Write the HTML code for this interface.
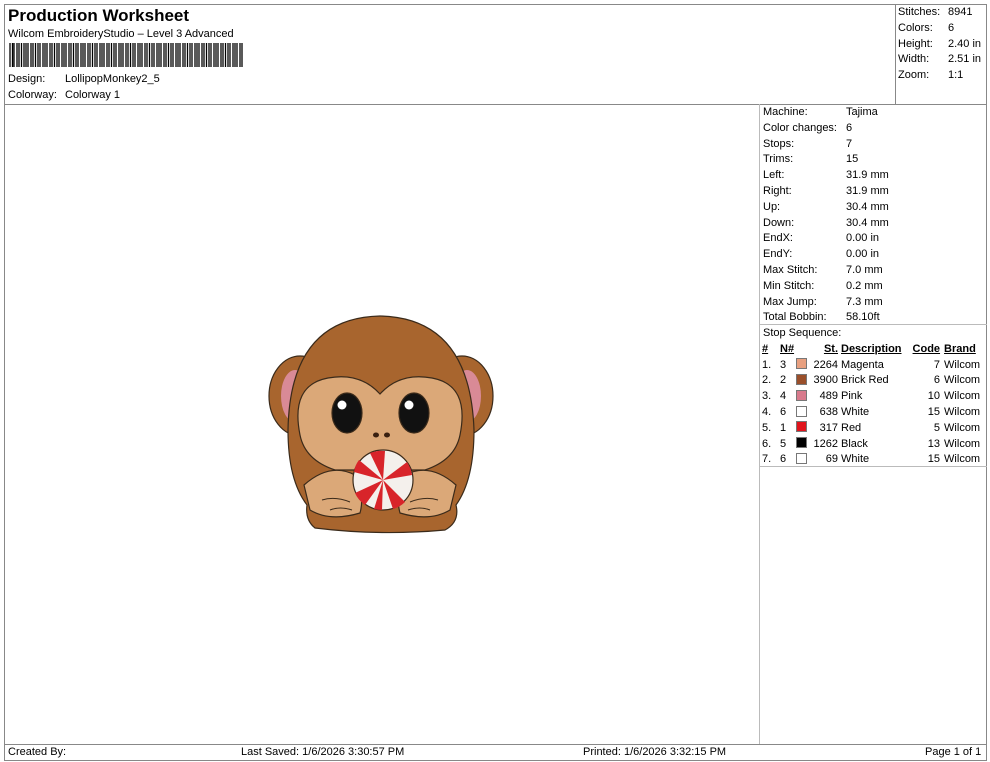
<!DOCTYPE html>
<html><head><style>
body{margin:0;width:990px;height:762px;background:#fff;font-family:"Liberation Sans",Arial,sans-serif;font-size:11px;color:#000;position:relative;overflow:hidden}
.a{position:absolute;white-space:nowrap}
.l{position:absolute;background:#888}
table{border-collapse:collapse;font-size:11px}
td{padding:0;height:15.8px}
.sw{display:inline-block;width:9px;height:9px;border:1px solid #777;vertical-align:-1px}
</style></head><body>
<div class="l" style="left:4px;top:4px;width:983px;height:1px"></div>
<div class="l" style="left:4px;top:4px;width:1px;height:757px"></div>
<div class="l" style="left:986px;top:4px;width:1px;height:757px"></div>
<div class="l" style="left:4px;top:104px;width:983px;height:1px"></div>
<div class="l" style="left:895px;top:4px;width:1px;height:100px"></div>
<div class="l" style="left:759px;top:104px;width:1px;height:641px;background:#bbb"></div>
<div class="l" style="left:759px;top:324px;width:228px;height:1px;background:#bbb"></div>
<div class="l" style="left:759px;top:466px;width:228px;height:1px;background:#bbb"></div>
<div class="l" style="left:4px;top:744px;width:983px;height:1px"></div>
<div class="l" style="left:4px;top:760px;width:983px;height:1px"></div>

<div class="a" style="left:8px;top:6px;font-size:17px;font-weight:bold">Production Worksheet</div>
<div class="a" style="left:8px;top:28px">Wilcom EmbroideryStudio – Level 3 Advanced</div>
<svg class="a" style="left:9px;top:43px" width="235" height="24">
<path stroke="#000" stroke-width="1.3" d="M1 0v24M3.5 0v24M5 0v24M8 0v24M10 0v24M12.5 0v24M15 0v24M17 0v24M19 0v24M22 0v24M24 0v24M26.5 0v24M29 0v24M31 0v24M34 0v24M36 0v24M38 0v24M41 0v24M43 0v24M45.5 0v24M48 0v24M50 0v24M53 0v24M55 0v24M57 0v24M60 0v24M62 0v24M64.5 0v24M67 0v24M69 0v24M72 0v24M74 0v24M76 0v24M79 0v24M81 0v24M83.5 0v24M86 0v24M88 0v24M91 0v24M93 0v24M95 0v24M98 0v24M100 0v24M102.5 0v24M105 0v24M107 0v24M110 0v24M112 0v24M114 0v24M117 0v24M119 0v24M121.5 0v24M124 0v24M126 0v24M129 0v24M131 0v24M133 0v24M136 0v24M138 0v24M140.5 0v24M143 0v24M145 0v24M148 0v24M150 0v24M152 0v24M155 0v24M157 0v24M159.5 0v24M162 0v24M164 0v24M167 0v24M169 0v24M171 0v24M174 0v24M176 0v24M178.5 0v24M181 0v24M183 0v24M186 0v24M188 0v24M190 0v24M193 0v24M195 0v24M197.5 0v24M200 0v24M202 0v24M205 0v24M207 0v24M209 0v24M212 0v24M214 0v24M216.5 0v24M219 0v24M221 0v24M224 0v24M226 0v24M228 0v24M231 0v24M233 0v24"/>
</svg>
<div class="a" style="left:8px;top:73px">Design:</div><div class="a" style="left:65px;top:73px">LollipopMonkey2_5</div>
<div class="a" style="left:8px;top:89px">Colorway:</div><div class="a" style="left:65px;top:89px">Colorway 1</div>

<div class="a" style="left:898px;top:5px;line-height:15.8px">Stitches:<br>Colors:<br>Height:<br>Width:<br>Zoom:</div>
<div class="a" style="left:948px;top:5px;line-height:15.8px">8941<br>6<br>2.40 in<br>2.51 in<br>1:1</div>

<div class="a" style="left:763px;top:105px;line-height:15.8px">Machine:<br>Color changes:<br>Stops:<br>Trims:<br>Left:<br>Right:<br>Up:<br>Down:<br>EndX:<br>EndY:<br>Max Stitch:<br>Min Stitch:<br>Max Jump:<br>Total Bobbin:<br>Stop Sequence:</div>
<div class="a" style="left:846px;top:105px;line-height:15.8px">Tajima<br>6<br>7<br>15<br>31.9 mm<br>31.9 mm<br>30.4 mm<br>30.4 mm<br>0.00 in<br>0.00 in<br>7.0 mm<br>0.2 mm<br>7.3 mm<br>58.10ft</div>

<table class="a" style="left:762px;top:341px;width:223px">
<tr style="font-weight:bold;text-decoration:underline"><td style="width:18px">#</td><td style="width:16px">N#</td><td style="width:14px"></td><td style="text-align:right;width:28px">St.</td><td style="padding-left:3px">Description</td><td style="text-align:right">Code</td><td style="padding-left:4px">Brand</td></tr>
<tr><td>1.</td><td>3</td><td><span class="sw" style="background:#e8a080"></span></td><td align="right">2264</td><td style="padding-left:3px">Magenta</td><td align="right">7</td><td style="padding-left:4px">Wilcom</td></tr>
<tr><td>2.</td><td>2</td><td><span class="sw" style="background:#9a4f2a"></span></td><td align="right">3900</td><td style="padding-left:3px">Brick Red</td><td align="right">6</td><td style="padding-left:4px">Wilcom</td></tr>
<tr><td>3.</td><td>4</td><td><span class="sw" style="background:#d87a8c"></span></td><td align="right">489</td><td style="padding-left:3px">Pink</td><td align="right">10</td><td style="padding-left:4px">Wilcom</td></tr>
<tr><td>4.</td><td>6</td><td><span class="sw" style="background:#fff"></span></td><td align="right">638</td><td style="padding-left:3px">White</td><td align="right">15</td><td style="padding-left:4px">Wilcom</td></tr>
<tr><td>5.</td><td>1</td><td><span class="sw" style="background:#e0141c"></span></td><td align="right">317</td><td style="padding-left:3px">Red</td><td align="right">5</td><td style="padding-left:4px">Wilcom</td></tr>
<tr><td>6.</td><td>5</td><td><span class="sw" style="background:#000"></span></td><td align="right">1262</td><td style="padding-left:3px">Black</td><td align="right">13</td><td style="padding-left:4px">Wilcom</td></tr>
<tr><td>7.</td><td>6</td><td><span class="sw" style="background:#fff"></span></td><td align="right">69</td><td style="padding-left:3px">White</td><td align="right">15</td><td style="padding-left:4px">Wilcom</td></tr>
</table>

<svg class="a" style="left:260px;top:310px" width="240" height="230" viewBox="0 0 240 230">
<g stroke="#3a2a1a" stroke-width="1.2">
<ellipse cx="40" cy="86" rx="31" ry="40" fill="#a8652e"/>
<ellipse cx="202" cy="86" rx="31" ry="40" fill="#a8652e"/>
<ellipse cx="35" cy="86" rx="14" ry="26" fill="#d98a96" stroke="none"/>
<ellipse cx="207" cy="86" rx="14" ry="26" fill="#d98a96" stroke="none"/>
<path d="M55 218 Q45 210 47 195 Q28 170 28 120 Q30 8 120 6 Q210 8 214 120 Q214 170 196 195 Q200 212 185 220 Q120 226 55 218Z" fill="#a8652e"/>
<path d="M40 125 Q30 75 68 68 Q100 62 120 84 Q140 62 172 68 Q210 75 200 125 Q195 150 165 160 L75 160 Q45 150 40 125Z" fill="#dba878"/>
<ellipse cx="87" cy="103" rx="15" ry="20" fill="#111"/>
<ellipse cx="154" cy="103" rx="15" ry="20" fill="#111"/>
<path d="M44 175 Q70 152 95 165 Q105 185 100 203 Q70 212 50 200Z" fill="#dba878"/>
<path d="M196 175 Q170 152 145 165 Q135 185 140 203 Q170 212 190 200Z" fill="#dba878"/>
<circle cx="123" cy="170" r="30" fill="#f4f0ec"/>
</g>
<circle cx="82" cy="95" r="4.5" fill="#fff"/><circle cx="149" cy="95" r="4.5" fill="#fff"/>
<ellipse cx="116" cy="125" rx="3" ry="2.5" fill="#3a2010"/><ellipse cx="127" cy="125" rx="3" ry="2.5" fill="#3a2010"/>
<g fill="#d8242a">
<path d="M123 170 L110 143 Q118 140 125 141Z"/><path d="M123 170 L147 152 Q151 158 152 165Z"/>
<path d="M123 170 L145 192 Q140 197 133 199Z"/><path d="M123 170 L105 195 Q98 190 95 183Z"/>
<path d="M123 170 L94 162 Q95 155 99 150Z"/><path d="M123 170 L122 200 Q118 200 114 199Z"/>
</g>
<g stroke="#3a2a1a" stroke-width="1" fill="none"><path d="M62 190 Q75 186 90 192M70 200 Q80 196 92 200M178 190 Q165 186 150 192M170 200 Q160 196 148 200"/></g>
</svg>

<div class="a" style="left:8px;top:746px">Created By:</div>
<div class="a" style="left:241px;top:746px">Last Saved: 1/6/2026 3:30:57 PM</div>
<div class="a" style="left:583px;top:746px">Printed: 1/6/2026 3:32:15 PM</div>
<div class="a" style="left:925px;top:746px">Page 1 of 1</div>
</body></html>
